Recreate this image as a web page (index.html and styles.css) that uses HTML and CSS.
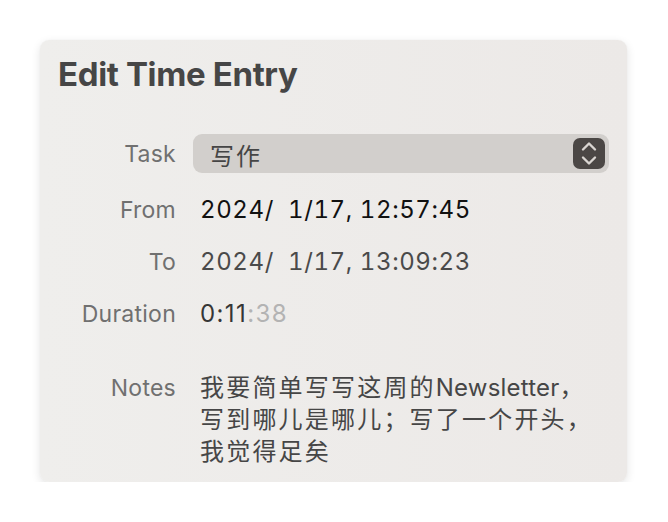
FILE: index.html
```html
<!DOCTYPE html>
<html lang="zh-CN">
<head>
    <meta charset="UTF-8">
    <meta name="viewport" content="width=device-width, initial-scale=1.0">
    <title>Edit Time Entry</title>
    <link rel="stylesheet" href="styles.css">
</head>
<body>

<div class="card">
    <h1>Edit Time Entry</h1>

    <div class="form">
        <div class="label task-label">Task</div>
        <div class="select">
            <span class="select-text">写作</span>
            <span class="stepper">
                <svg width="32" height="31" viewBox="0 0 32 31">
                    <polyline points="10,11.5 16,5.5 22,11.5" fill="none" stroke="#d9d5d1" stroke-width="2.4" stroke-linecap="round" stroke-linejoin="round"/>
                    <polyline points="10,19.5 16,25.5 22,19.5" fill="none" stroke="#d9d5d1" stroke-width="2.4" stroke-linecap="round" stroke-linejoin="round"/>
                </svg>
            </span>
        </div>

        <div class="label">From</div>
        <div class="value date from">2024/&nbsp; 1/17, 12:57:45</div>

        <div class="label">To</div>
        <div class="value date">2024/&nbsp; 1/17, 13:09:23</div>

        <div class="label">Duration</div>
        <div class="value duration">0:11<span class="faded">:38</span></div>

        <div class="label notes-label">Notes</div>
        <div class="value notes">我要简单写写这周的<span class="latin">Newsletter</span>，<br>写到哪儿是哪儿；写了一个开头，<br>我觉得足矣</div>
    </div>
</div>

</body>
</html>
```

FILE: styles.css
```css
body {
    margin: 0;
    background: #ffffff;
    font-family: Inter, "Noto Sans CJK SC", sans-serif;
}
.card {
    margin: 40px 0 0 40px;
    width: 587px;
    height: 442px;
    box-sizing: border-box;
    padding: 14px 18px 0 18px;
    background: linear-gradient(to right, #efeeec, #ece9e7);
    border-radius: 9px;
    box-shadow: 0 3px 10px rgba(0, 0, 0, 0.11), 0 0 1px rgba(0, 0, 0, 0.08);
}
h1 {
    margin: 0;
    font-size: 33px;
    line-height: 40px;
    font-weight: 700;
    letter-spacing: -0.35px;
    color: #464646;
}
.form {
    display: grid;
    grid-template-columns: 118px 1fr;
    column-gap: 17px;
    row-gap: 20px;
    margin-top: 40px;
    font-size: 23px;
    line-height: 32px;
}
.label {
    text-align: right;
    color: #707070;
    letter-spacing: 0.25px;
}
.task-label {
    line-height: 39px;
    padding-top: 1px;
}
.select {
    display: flex;
    align-items: center;
    justify-content: space-between;
    height: 39px;
    padding: 0 4px 0 17px;
    background: #d2cfcc;
    border-radius: 9px;
    color: #454545;
}
.select-text {
    font-family: "Noto Sans CJK SC", sans-serif;
    font-size: 24px;
    letter-spacing: 2px;
    line-height: 39px;
    padding-top: 1px;
}
.stepper {
    display: flex;
    width: 32px;
    height: 31px;
    background: #4b4745;
    border-radius: 7px;
}
.value {
    padding-left: 7px;
    color: #4a4a4a;
}
.date {
    font-size: 24px;
    font-variant-numeric: tabular-nums;
    letter-spacing: 0.6px;
}
.from {
    color: #111111;
}
.duration {
    font-size: 24px;
    letter-spacing: 1.4px;
    color: #363636;
}
.faded {
    color: #b3b3b3;
}
.notes-label,
.notes {
    margin-top: 22px;
}
.notes {
    font-size: 24px;
    line-height: 32px;
    letter-spacing: 2.2px;
    color: #464646;
}
.latin {
    letter-spacing: 0.2px;
}
```
